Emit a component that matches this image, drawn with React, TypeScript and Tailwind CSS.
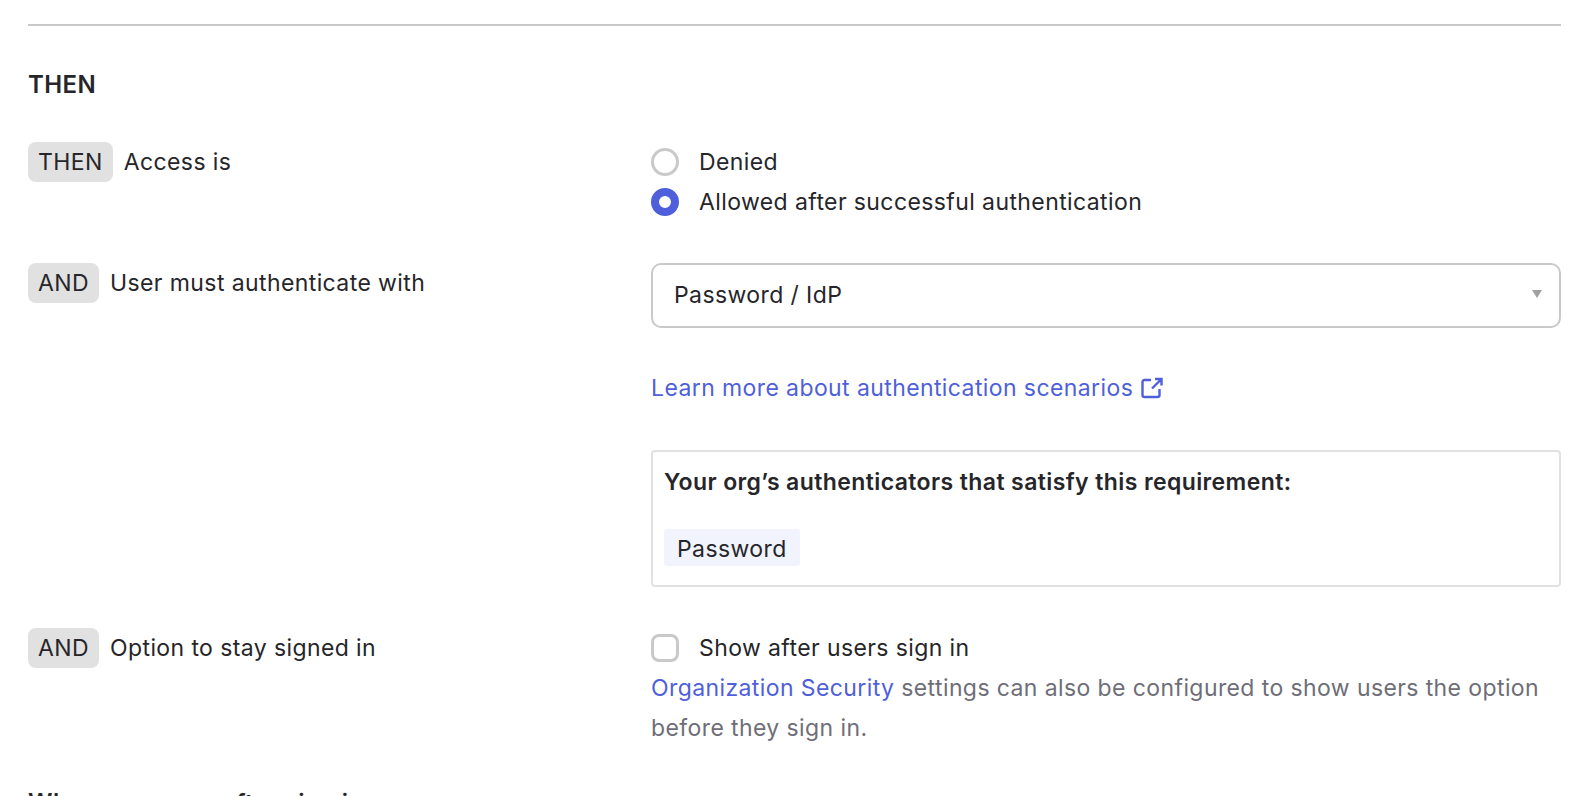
import React from 'react';

const Tag = ({ children }: { children: React.ReactNode }) => (
  <span className="inline-block h-[40px] leading-[40px] px-[10px] mr-[11px] rounded-[8px] bg-[#e1e1e1]">
    {children}
  </span>
);

const ExternalIcon = () => (
  <svg width="22" height="22" viewBox="0 0 22 22" fill="none" stroke="#4f5fdc" strokeWidth="2.4" className="ml-[8px] inline-block">
    <path d="M10 3H3.500a2 2 0 0 0-2 2v13a2 2 0 0 0 2 2h13a2 2 0 0 0 2-2v-6" />
    <path d="M14 2h6.500v6.500M20.500 2l-9.500 9.500" />
  </svg>
);

export default function App() {
  return (
    <div className="w-[1586px] h-[796px] overflow-hidden bg-white pl-[28px] pr-[25px] pt-[24px] font-['Inter',sans-serif] text-[23px] leading-[40px] tracking-[0.4px] text-[#26262a]">
      <div className="border-t-2 border-[#c9c9c9]" />

      <h2 className="mt-[39px] text-[24px] leading-[40px] font-semibold">THEN</h2>

      {/* Access */}
      <div className="mt-[37px] flex">
        <div className="w-[623px] shrink-0">
          <Tag>THEN</Tag>Access is
        </div>
        <div className="flex-1">
          <label className="flex items-center h-[40px]">
            <span className="w-[28px] h-[28px] rounded-full border-[3px] border-[#c9c9c9] mr-[20px]" />
            Denied
          </label>
          <label className="flex items-center h-[40px]">
            <span className="w-[28px] h-[28px] rounded-full border-[8.5px] border-[#4f5fdc] bg-white mr-[20px]" />
            Allowed after successful authentication
          </label>
        </div>
      </div>

      {/* Authenticate with */}
      <div className="mt-[41px] flex">
        <div className="w-[623px] shrink-0">
          <Tag>AND</Tag>User must authenticate with
        </div>
        <div className="flex-1">
          <div className="h-[65px] rounded-[10px] border-2 border-[#c9c9c9] pl-[21px] pr-[17px] flex items-center justify-between">
            <span className="-translate-y-px">Password / IdP</span>
            <span className="w-0 h-0 border-x-[5px] border-x-transparent border-t-[8px] border-t-[#a0a0a0] mb-[3px]" />
          </div>
          <a className="mt-[40px] flex items-center text-[#4f5fdc]">
            Learn more about authentication scenarios
            <ExternalIcon />
          </a>
          <div className="mt-[42px] h-[137px] rounded-[4px] border-2 border-[#e1e1e1] px-[11px] pt-[10px]">
            <p className="font-semibold">Your org’s authenticators that satisfy this requirement:</p>
            <span className="block w-fit mt-[27px] h-[37px] leading-[41px] px-[13px] rounded-[3px] bg-[#f2f4fd]">Password</span>
          </div>
        </div>
      </div>

      {/* Stay signed in */}
      <div className="mt-[41px] flex">
        <div className="w-[623px] shrink-0">
          <Tag>AND</Tag>Option to stay signed in
        </div>
        <div className="flex-1">
          <label className="flex items-center h-[40px]">
            <span className="w-[28px] h-[28px] rounded-[8px] border-[3px] border-[#c9c9c9] mr-[20px]" />
            Show after users sign in
          </label>
          <p className="text-[#6e6e78]">
            <a className="text-[#4f5fdc]">Organization Security</a> settings can also be configured to show users the option before they sign in.
          </p>
        </div>
      </div>

      <h2 className="mt-[35px] text-[24px] leading-[40px] font-semibold">When users are after sign in</h2>
    </div>
  );
}
